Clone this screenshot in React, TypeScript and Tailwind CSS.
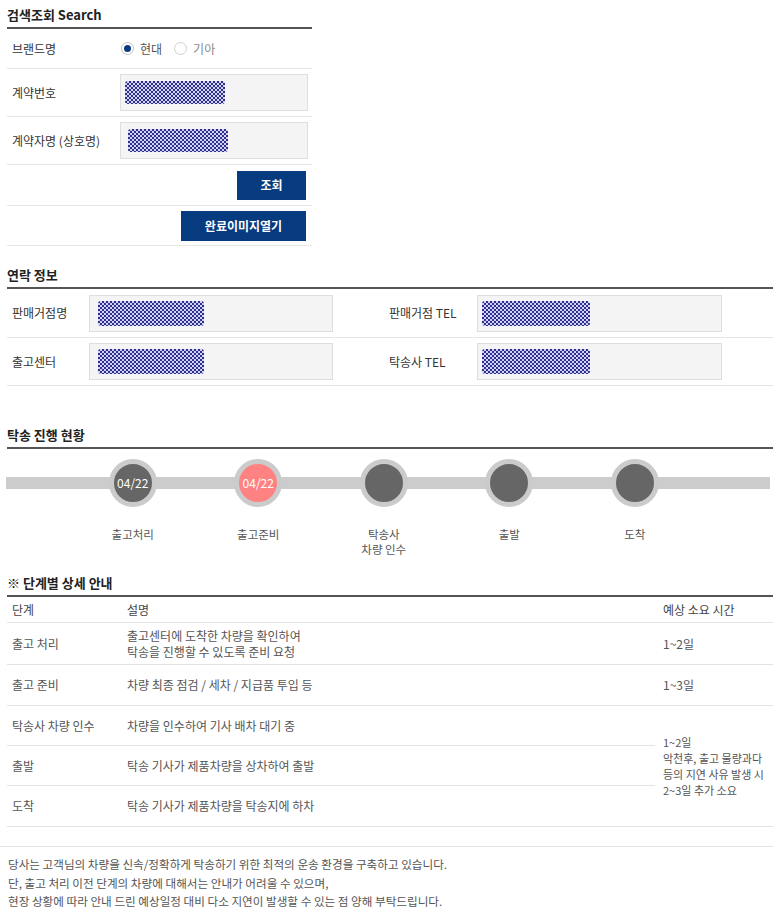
import React from "react";

function Mask({ w, h, id }: { w: number; h: number; id: string }) {
  return (
    <svg width={w} height={h} className="block">
      <defs>
        <pattern id={id} width="4" height="4" patternUnits="userSpaceOnUse">
          <rect width="4" height="4" fill="#d2d2f2" />
          <rect width="2" height="2" fill="#2e2e8c" />
          <rect x="2" y="2" width="2" height="2" fill="#2e2e8c" />
        </pattern>
      </defs>
      <rect width={w} height={h} rx="3" fill={`url(#${id})`} />
    </svg>
  );
}

function Title({ children }: { children: React.ReactNode }) {
  return (
    <div className="pt-[6px] pb-[4px] border-b-2 border-[#555] text-[13px] leading-[17px] font-bold text-[#222]">
      {children}
    </div>
  );
}

function InputBox({ w, id, mw, mh, pad }: { w: number; id: string; mw: number; mh: number; pad: number }) {
  return (
    <div
      className="h-[37px] bg-[#f4f4f4] border border-[#dedede] flex items-center"
      style={{ width: w, paddingLeft: pad }}
    >
      <Mask w={mw} h={mh} id={id} />
    </div>
  );
}

const steps = [
  { label: ["출고처리"], date: "04/22", color: "bg-[#666666]" },
  { label: ["출고준비"], date: "04/22", color: "bg-[#ff8282]" },
  { label: ["탁송사", "차량 인수"], date: "", color: "bg-[#666666]" },
  { label: ["출발"], date: "", color: "bg-[#666666]" },
  { label: ["도착"], date: "", color: "bg-[#666666]" },
];

export default function App() {
  return (
    <div className="w-[773px] pl-[7px] bg-white font-['Noto_Sans_CJK_KR','Noto_Sans',sans-serif] text-[#333]">
      {/* Search */}
      <div className="w-[305px]">
        <Title>검색조회 Search</Title>
        <div className="flex h-[40px] items-center border-b border-[#e6e6e6]">
          <div className="w-[113px] pl-[5px] text-[12px] leading-[16px] text-[#333]">브랜드명</div>
          <div className="flex items-center ml-[1px] text-[12px] leading-[16px]">
            <span className="w-[13px] h-[13px] rounded-full border border-[#c4c4c4] flex items-center justify-center">
              <span className="w-[7px] h-[7px] rounded-full bg-[#0b3a7e]" />
            </span>
            <span className="ml-[6px] text-[#555]">현대</span>
            <span className="ml-[12px] w-[13px] h-[13px] rounded-full border border-[#cfcfcf]" />
            <span className="ml-[6px] text-[#888]">기아</span>
          </div>
        </div>
        <div className="flex h-[48px] items-center border-b border-[#e6e6e6]">
          <div className="w-[113px] pl-[5px] text-[12px] leading-[16px]">계약번호</div>
          <InputBox w={188} id="m1" mw={100} mh={23} pad={4} />
        </div>
        <div className="flex h-[48px] items-center border-b border-[#e6e6e6]">
          <div className="w-[113px] pl-[5px] text-[12px] leading-[16px]">계약자명 (상호명)</div>
          <InputBox w={188} id="m2" mw={100} mh={23} pad={7} />
        </div>
        <div className="flex h-[41px] items-center justify-end pr-[6px] border-b border-[#e6e6e6]">
          <button className="w-[69px] h-[29px] bg-[#063b7f] text-white text-[12px] font-bold leading-[16px]">조회</button>
        </div>
        <div className="flex h-[40px] items-center justify-end pr-[6px] border-b border-[#e6e6e6]">
          <button className="w-[125px] h-[30px] bg-[#063b7f] text-white text-[12px] font-bold leading-[16px]">완료이미지열기</button>
        </div>
      </div>

      {/* Contact */}
      <div className="mt-[14px]">
        <Title>연락 정보</Title>
        {[
          ["판매거점명", "판매거점 TEL", "c1", "c2"],
          ["출고센터", "탁송사 TEL", "c3", "c4"],
        ].map((r, i) => (
          <div key={i} className={`flex items-center border-b border-[#e6e6e6] ${i === 0 ? "h-[49px]" : "h-[48px]"}`}>
            <div className="w-[82px] pl-[5px] text-[12px] leading-[16px]">{r[0]}</div>
            <div className="w-[295px]">
              <InputBox w={244} id={r[2]} mw={106} mh={25} pad={8} />
            </div>
            <div className="w-[93px] pl-[5px] text-[12px] leading-[16px]">{r[1]}</div>
            <InputBox w={245} id={r[3]} mw={108} mh={25} pad={4} />
          </div>
        ))}
      </div>

      {/* Progress */}
      <div className="mt-[34px]">
        <Title>탁송 진행 현황</Title>
        <div className="relative h-[119px] pt-[10px]">
          <div className="absolute left-[-1px] right-[3px] top-[28px] h-[12px] bg-[#cccccc]" />
          <div className="relative flex pl-[63px]">
            {steps.map((s, i) => (
              <div key={i} className="w-[125.5px] flex flex-col items-center">
                <div
                  className={`w-[48px] h-[48px] rounded-full border-[5px] border-[#cbcbcb] ${s.color} flex items-center justify-center text-white text-[12px] leading-[14px]`}
                >
                  {s.date}
                </div>
                <div className="mt-[20px] text-[11.5px] leading-[15px] text-[#555] text-center">
                  {s.label.map((l, j) => (
                    <div key={j}>{l}</div>
                  ))}
                </div>
              </div>
            ))}
          </div>
        </div>
      </div>

      {/* Detail */}
      <div>
        <Title>※ 단계별 상세 안내</Title>
        <div className="grid grid-cols-[115px_533px_118px] grid-rows-[26px_42px_41px_40px_40px_41px] text-[12px] leading-[16px] text-[#555]">
          <div className="flex items-center pl-[5px] border-b border-[#e3e3e3] text-[#444]">단계</div>
          <div className="flex items-center pl-[5px] border-b border-[#e3e3e3] text-[#444]">설명</div>
          <div className="flex items-center pl-[8px] border-b border-[#e3e3e3] text-[#444]">예상 소요 시간</div>

          <div className="flex items-center pl-[5px] border-b border-[#e3e3e3]">출고 처리</div>
          <div className="flex flex-col justify-center pl-[5px] border-b border-[#e3e3e3]">
            <div>출고센터에 도착한 차량을 확인하여</div>
            <div>탁송을 진행할 수 있도록 준비 요청</div>
          </div>
          <div className="flex items-center pl-[8px] border-b border-[#e3e3e3]">1~2일</div>

          <div className="flex items-center pl-[5px] border-b border-[#e3e3e3]">출고 준비</div>
          <div className="flex items-center pl-[5px] border-b border-[#e3e3e3]">차량 최종 점검 / 세차 / 지급품 투입 등</div>
          <div className="flex items-center pl-[8px] border-b border-[#e3e3e3]">1~3일</div>

          <div className="flex items-center pl-[5px] border-b border-[#e3e3e3]">탁송사 차량 인수</div>
          <div className="flex items-center pl-[5px] border-b border-[#e3e3e3]">차량을 인수하여 기사 배차 대기 중</div>
          <div className="row-span-3 flex flex-col justify-center pl-[8px] border-b border-[#e3e3e3] text-[11px] whitespace-nowrap">
            <div>1~2일</div>
            <div>악천후, 출고 물량과다</div>
            <div>등의 지연 사유 발생 시</div>
            <div>2~3일 추가 소요</div>
          </div>

          <div className="flex items-center pl-[5px] border-b border-[#e3e3e3]">출발</div>
          <div className="flex items-center pl-[5px] border-b border-[#e3e3e3]">탁송 기사가 제품차량을 상차하여 출발</div>

          <div className="flex items-center pl-[5px] border-b border-[#e3e3e3]">도착</div>
          <div className="flex items-center pl-[5px] border-b border-[#e3e3e3]">탁송 기사가 제품차량을 탁송지에 하차</div>
        </div>
      </div>

      {/* Footer note */}
      <div className="mt-[19px] -ml-[7px] border-t border-[#e6e6e6] pt-[8px] pl-[8px] pb-[8px] text-[11.6px] leading-[18.5px] text-[#555]">
        <div>당사는 고객님의 차량을 신속/정확하게 탁송하기 위한 최적의 운송 환경을 구축하고 있습니다.</div>
        <div>단, 출고 처리 이전 단계의 차량에 대해서는 안내가 어려울 수 있으며,</div>
        <div>현장 상황에 따라 안내 드린 예상일정 대비 다소 지연이 발생할 수 있는 점 양해 부탁드립니다.</div>
      </div>
    </div>
  );
}
